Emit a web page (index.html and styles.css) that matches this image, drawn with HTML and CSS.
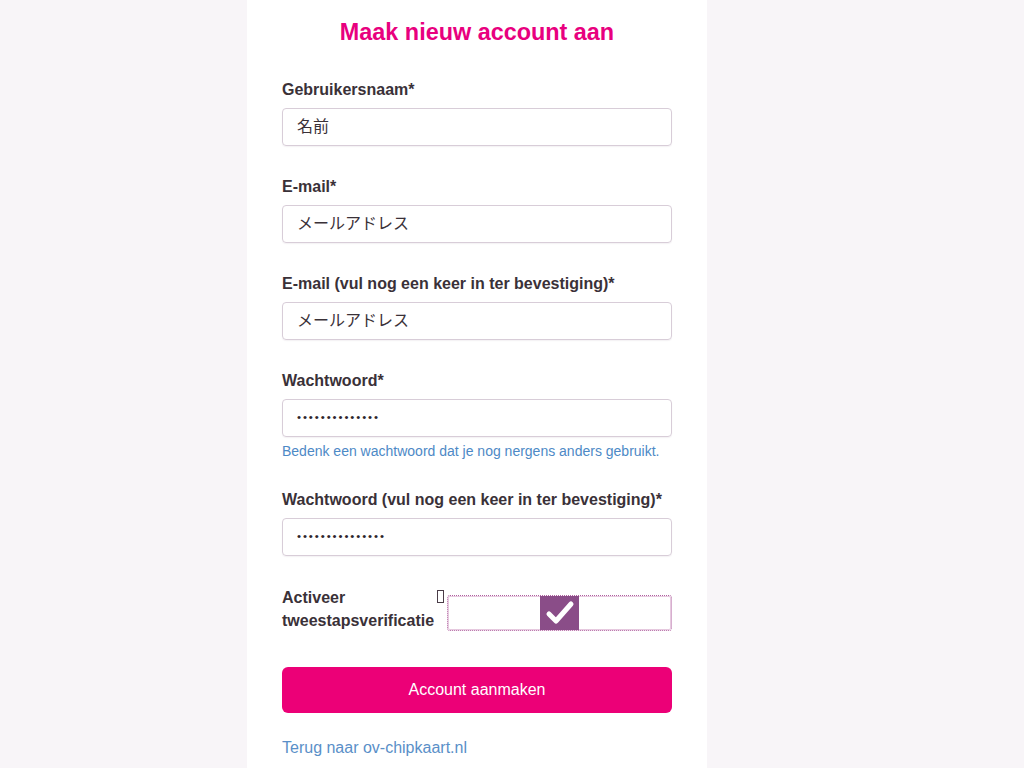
FILE: index.html
```html
<!DOCTYPE html>
<html lang="nl">
<head>
<meta charset="utf-8">
<title>Maak nieuw account aan</title>
<link rel="stylesheet" href="styles.css">
</head>
<body>
<div class="page">
  <main class="card">
    <h1 class="title">Maak nieuw account aan</h1>
    <form class="form">
      <div class="field">
        <label class="label">Gebruikersnaam*</label>
        <div class="input">名前</div>
      </div>
      <div class="field">
        <label class="label">E-mail*</label>
        <div class="input">メールアドレス</div>
      </div>
      <div class="field">
        <label class="label">E-mail (vul nog een keer in ter bevestiging)*</label>
        <div class="input">メールアドレス</div>
      </div>
      <div class="field">
        <label class="label">Wachtwoord*</label>
        <div class="input pw">••••••••••••••</div>
        <p class="hint">Bedenk een wachtwoord dat je nog nergens anders gebruikt.</p>
      </div>
      <div class="field">
        <label class="label">Wachtwoord (vul nog een keer in ter bevestiging)*</label>
        <div class="input pw">•••••••••••••••</div>
      </div>
      <div class="check-row">
        <label class="check-label">Activeer tweestapsverificatie<span class="missing"></span></label>
        <div class="toggle">
          <span class="tick">
            <svg width="30" height="26" viewBox="0 0 30 26"><path d="M4 14 L11 21 L26 4" fill="none" stroke="#fff" stroke-width="5" stroke-linecap="round" stroke-linejoin="round"/></svg>
          </span>
        </div>
      </div>
      <button type="button" class="submit">Account aanmaken</button>
      <a class="back" href="#">Terug naar ov-chipkaart.nl</a>
    </form>
  </main>
</div>
</body>
</html>
```
FILE: styles.css
```css
html, body {
  margin: 0;
  padding: 0;
}
body {
  background: #f8f5f8;
  font-family: "Liberation Sans", Arial, "Noto Sans CJK JP", sans-serif;
  color: #3a3138;
  height: 768px;
  overflow: hidden;
}
.page {
  display: flex;
  padding-left: 247px;
}
.card {
  width: 390px;
  background: #fff;
  padding: 19px 35px 40px 35px;
  min-height: 720px;
}
.title {
  margin: 0;
  font-size: 23.4px;
  line-height: 27px;
  font-weight: bold;
  color: #e8007e;
  text-align: center;
}
.form {
  display: flex;
  flex-direction: column;
  margin-top: 34px;
}
.field {
  display: flex;
  flex-direction: column;
  margin-bottom: 31px;
}
.label {
  font-size: 16px;
  line-height: 20px;
  font-weight: bold;
  margin-bottom: 8px;
  color: #3a3138;
}
.input {
  height: 36px;
  border: 1px solid #d8cdd8;
  border-radius: 4px;
  padding: 0 14px;
  font-size: 16px;
  line-height: 36px;
  color: #3a3138;
  font-family: "Liberation Sans", "Noto Sans CJK JP", sans-serif;
  box-shadow: 0 1px 1px rgba(120, 90, 120, 0.08);
}
.input.pw {
  font-size: 11.5px;
  letter-spacing: 1.9px;
  line-height: 35px;
  color: #2e262c;
}
.hint {
  margin: 6px 0 0 0;
  font-size: 14px;
  line-height: 16px;
  color: #4d89c6;
}
.check-row {
  display: flex;
  align-items: flex-start;
  gap: 3px;
}
.check-label {
  width: 162px;
  margin-top: -1px;
  font-size: 16px;
  line-height: 23px;
  font-weight: bold;
  color: #3a3138;
  position: relative;
}
.missing {
  position: absolute;
  left: 155px;
  top: 4px;
  width: 5px;
  height: 11px;
  border: 1px solid #4a3d48;
}
.toggle {
  flex: 1;
  height: 34px;
  margin-top: 8px;
  border: 1px dotted #b0609f;
  border-radius: 3px;
  display: flex;
  justify-content: center;
  box-shadow: inset 0 0 0 1px #e6c9df;
}
.tick {
  width: 39px;
  height: 34px;
  background: #8a4d88;
  display: flex;
  align-items: center;
  justify-content: center;
}
.submit {
  margin-top: 35px;
  height: 46px;
  border: none;
  border-radius: 6px;
  background: #ec0077;
  color: #fff;
  font-family: "Liberation Sans", Arial, sans-serif;
  font-size: 16px;
  cursor: pointer;
}
.back {
  margin-top: 26px;
  font-size: 16px;
  line-height: 18px;
  color: #5a8fc8;
  text-decoration: none;
}
```
